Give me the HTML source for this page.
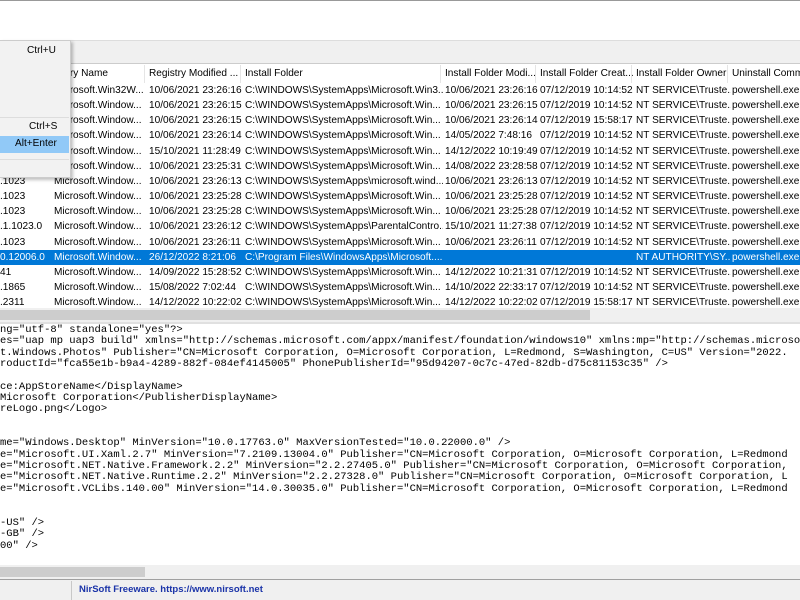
<!DOCTYPE html><html><head><style>
*{margin:0;padding:0;box-sizing:border-box}
body{width:800px;height:600px;overflow:hidden;background:#fff;font-family:"Liberation Sans",sans-serif;font-size:10.1px;color:#000;position:relative}
.abs{position:absolute;white-space:nowrap}
.row{position:absolute;left:0;width:800px;height:15px;line-height:15px;white-space:nowrap}
.row span{position:absolute;overflow:hidden}
.sel{background:#0078d7;color:#fff}
pre{font-family:"Liberation Mono",monospace;font-size:10.5px;line-height:11.35px;position:absolute;left:0;top:325px;color:#000}
</style></head><body>
<div class="abs" style="left:0;top:0;width:800px;height:1px;background:#999"></div>
<div class="abs" style="left:0;top:40px;width:800px;height:24px;background:#f0f0f0;border-top:1px solid #ddd;border-bottom:1px solid #ccc"></div>
<div class="abs" style="left:0;top:65px;width:800px;height:18px;background:#fff;line-height:18px">
<span class="abs" style="left:62px">stry Name</span>
<span class="abs" style="left:144px;width:1px;height:18px;background:#e5e5e5"></span>
<span class="abs" style="left:149px">Registry Modified ...</span>
<span class="abs" style="left:240px;width:1px;height:18px;background:#e5e5e5"></span>
<span class="abs" style="left:245px">Install Folder</span>
<span class="abs" style="left:440px;width:1px;height:18px;background:#e5e5e5"></span>
<span class="abs" style="left:445px">Install Folder Modi...</span>
<span class="abs" style="left:535px;width:1px;height:18px;background:#e5e5e5"></span>
<span class="abs" style="left:540px">Install Folder Creat...</span>
<span class="abs" style="left:631px;width:1px;height:18px;background:#e5e5e5"></span>
<span class="abs" style="left:636px">Install Folder Owner</span>
<span class="abs" style="left:727px;width:1px;height:18px;background:#e5e5e5"></span>
<span class="abs" style="left:732px">Uninstall Comm</span>
</div>
<div id="rows"></div>
<script>
var d=[
["","Microsoft.Win32W...","10/06/2021 23:26:16","C:\\WINDOWS\\SystemApps\\Microsoft.Win3...","10/06/2021 23:26:16","07/12/2019 10:14:52","NT SERVICE\\Truste...","powershell.exe -"],
["","Microsoft.Window...","10/06/2021 23:26:15","C:\\WINDOWS\\SystemApps\\Microsoft.Win...","10/06/2021 23:26:15","07/12/2019 10:14:52","NT SERVICE\\Truste...","powershell.exe -"],
["","Microsoft.Window...","10/06/2021 23:26:15","C:\\WINDOWS\\SystemApps\\Microsoft.Win...","10/06/2021 23:26:14","07/12/2019 15:58:17","NT SERVICE\\Truste...","powershell.exe -"],
["","Microsoft.Window...","10/06/2021 23:26:14","C:\\WINDOWS\\SystemApps\\Microsoft.Win...","14/05/2022 7:48:16","07/12/2019 10:14:52","NT SERVICE\\Truste...","powershell.exe -"],
["","Microsoft.Window...","15/10/2021 11:28:49","C:\\WINDOWS\\SystemApps\\Microsoft.Win...","14/12/2022 10:19:49","07/12/2019 10:14:52","NT SERVICE\\Truste...","powershell.exe -"],
["","Microsoft.Window...","10/06/2021 23:25:31","C:\\WINDOWS\\SystemApps\\Microsoft.Win...","14/08/2022 23:28:58","07/12/2019 10:14:52","NT SERVICE\\Truste...","powershell.exe -"],
[".1023","Microsoft.Window...","10/06/2021 23:26:13","C:\\WINDOWS\\SystemApps\\microsoft.wind...","10/06/2021 23:26:13","07/12/2019 10:14:52","NT SERVICE\\Truste...","powershell.exe -"],
[".1023","Microsoft.Window...","10/06/2021 23:25:28","C:\\WINDOWS\\SystemApps\\Microsoft.Win...","10/06/2021 23:25:28","07/12/2019 10:14:52","NT SERVICE\\Truste...","powershell.exe -"],
[".1023","Microsoft.Window...","10/06/2021 23:25:28","C:\\WINDOWS\\SystemApps\\Microsoft.Win...","10/06/2021 23:25:28","07/12/2019 10:14:52","NT SERVICE\\Truste...","powershell.exe -"],
[".1.1023.0","Microsoft.Window...","10/06/2021 23:26:12","C:\\WINDOWS\\SystemApps\\ParentalContro...","15/10/2021 11:27:38","07/12/2019 10:14:52","NT SERVICE\\Truste...","powershell.exe -"],
[".1023","Microsoft.Window...","10/06/2021 23:26:11","C:\\WINDOWS\\SystemApps\\Microsoft.Win...","10/06/2021 23:26:11","07/12/2019 10:14:52","NT SERVICE\\Truste...","powershell.exe -"],
["0.12006.0","Microsoft.Window...","26/12/2022 8:21:06","C:\\Program Files\\WindowsApps\\Microsoft....","","","NT AUTHORITY\\SY...","powershell.exe -"],
["41","Microsoft.Window...","14/09/2022 15:28:52","C:\\WINDOWS\\SystemApps\\Microsoft.Win...","14/12/2022 10:21:31","07/12/2019 10:14:52","NT SERVICE\\Truste...","powershell.exe -"],
[".1865","Microsoft.Window...","15/08/2022 7:02:44","C:\\WINDOWS\\SystemApps\\Microsoft.Win...","14/10/2022 22:33:17","07/12/2019 10:14:52","NT SERVICE\\Truste...","powershell.exe -"],
[".2311","Microsoft.Window...","14/12/2022 10:22:02","C:\\WINDOWS\\SystemApps\\Microsoft.Win...","14/12/2022 10:22:02","07/12/2019 15:58:17","NT SERVICE\\Truste...","powershell.exe -"]];
var x=[0,54,149,245,445,540,636,732],w=[52,94,94,198,94,95,95,80],h="";
d.forEach(function(r,i){h+='<div class="row'+(i==11?' sel':'')+'" style="top:'+(83+i*15.15)+'px">';r.forEach(function(c,j){h+='<span style="left:'+x[j]+'px;width:'+w[j]+'px">'+c+'</span>'});h+='</div>'});
document.getElementById('rows').innerHTML=h;
</script>
<div class="abs" style="left:0;top:308px;width:800px;height:14px;background:#f0f0f0"></div>
<div class="abs" style="left:0;top:310px;width:590px;height:10px;background:#cdcdcd"></div>
<div class="abs" style="left:0;top:322px;width:800px;height:2px;background:#e0e0e0"></div>
<pre>ng="utf-8" standalone="yes"?&gt;
es="uap mp uap3 build" xmlns="http://schemas.microsoft.com/appx/manifest/foundation/windows10" xmlns:mp="http://schemas.microsoft
t.Windows.Photos" Publisher="CN=Microsoft Corporation, O=Microsoft Corporation, L=Redmond, S=Washington, C=US" Version="2022.
roductId="fca55e1b-b9a4-4289-882f-084ef4145005" PhonePublisherId="95d94207-0c7c-47ed-82db-d75c81153c35" /&gt;

ce:AppStoreName&lt;/DisplayName&gt;
Microsoft Corporation&lt;/PublisherDisplayName&gt;
reLogo.png&lt;/Logo&gt;


me="Windows.Desktop" MinVersion="10.0.17763.0" MaxVersionTested="10.0.22000.0" /&gt;
e="Microsoft.UI.Xaml.2.7" MinVersion="7.2109.13004.0" Publisher="CN=Microsoft Corporation, O=Microsoft Corporation, L=Redmond
e="Microsoft.NET.Native.Framework.2.2" MinVersion="2.2.27405.0" Publisher="CN=Microsoft Corporation, O=Microsoft Corporation,
e="Microsoft.NET.Native.Runtime.2.2" MinVersion="2.2.27328.0" Publisher="CN=Microsoft Corporation, O=Microsoft Corporation, L
e="Microsoft.VCLibs.140.00" MinVersion="14.0.30035.0" Publisher="CN=Microsoft Corporation, O=Microsoft Corporation, L=Redmond


-US" /&gt;
-GB" /&gt;
00" /&gt;</pre>
<div class="abs" style="left:0;top:565px;width:800px;height:14px;background:#f0f0f0"></div>
<div class="abs" style="left:0;top:567px;width:145px;height:10px;background:#cdcdcd"></div>
<div class="abs" style="left:0;top:579px;width:800px;height:21px;background:#f0f0f0;border-top:1px solid #a0a0a0"></div>
<div class="abs" style="left:71px;top:581px;width:1px;height:19px;background:#c8c8c8"></div>
<div class="abs" style="left:79px;top:584px;color:#1a33a8;font-weight:bold;font-size:9.5px">NirSoft Freeware. https://www.nirsoft.net</div>
<div class="abs" style="left:0;top:40px;width:71px;height:138px;background:#f2f2f2;border:1px solid #ccc;border-left:none;box-shadow:2px 2px 3px rgba(0,0,0,.25)">
<div class="abs" style="left:27px;top:4px">Ctrl+U</div>
<div class="abs" style="left:0;top:76px;width:69px;height:1px;background:#ddd"></div>
<div class="abs" style="left:29px;top:80px">Ctrl+S</div>
<div class="abs" style="left:0;top:95px;width:69px;height:17px;background:#91c9f7"></div>
<div class="abs" style="left:15px;top:97px">Alt+Enter</div>
<div class="abs" style="left:0;top:118px;width:69px;height:1px;background:#ddd"></div>
</div>
</body></html>
